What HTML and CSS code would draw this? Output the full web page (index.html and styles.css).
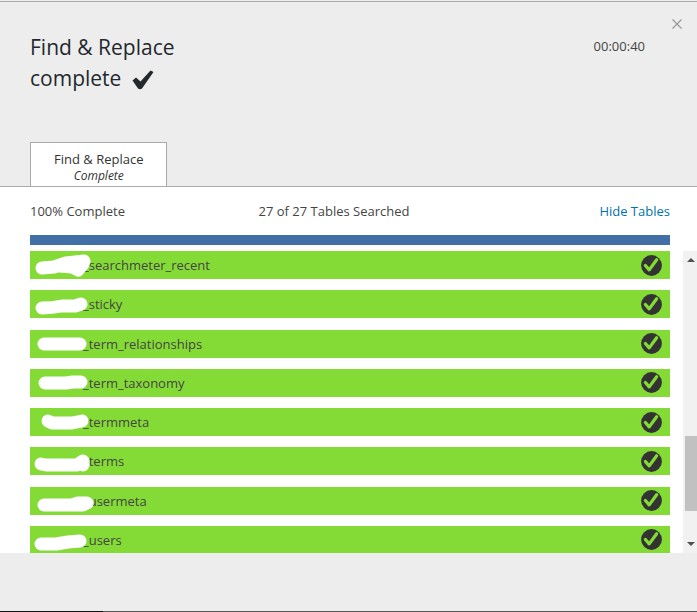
FILE: index.html
```
<!DOCTYPE html>
<html lang="en">
<head>
    <meta charset="UTF-8">
    <meta name="viewport" content="width=device-width, initial-scale=1.0">
    <title>Find &amp; Replace</title>
    <link rel="stylesheet" href="styles.css">
</head>
<body>
    <svg class="symbols" aria-hidden="true">
        <symbol id="done" viewBox="0 0 22 22">
            <circle cx="11" cy="11" r="10.9" fill="#333"/>
            <path d="M4.6 11 L8.6 15.6 L16.4 5" fill="none" stroke="#84db36" stroke-width="3.4" stroke-linecap="round" stroke-linejoin="round"/>
        </symbol>
    </svg>

    <div class="modal">
        <header class="modal-header">
            <div class="heading">
                <h2>Find &amp; Replace complete
                    <svg class="title-check" viewBox="0 0 22 20" aria-hidden="true">
                        <path d="M0.5 10.5 L4 7.5 L8.5 11.5 L18.5 0.5 L21.5 2 L10 18.5 Q8 20 6 18.5 Z" fill="#23282d"/>
                    </svg>
                </h2>
                <span class="timer">00:00:40</span>
            </div>
            <button class="close-button" aria-label="Close">
                <svg viewBox="0 0 10 10"><path d="M0.5 0.5 L9.5 9.5 M9.5 0.5 L0.5 9.5" stroke="#999" stroke-width="1.3"/></svg>
            </button>
            <button class="tab">
                <span>Find &amp; Replace</span>
                <em>Complete</em>
            </button>
        </header>

        <main class="progress">
            <div class="progress-info">
                <span>100% Complete</span>
                <span class="searched">27 of 27 Tables Searched</span>
                <a href="#tables">Hide Tables</a>
            </div>
            <div class="progress-bar"></div>

            <div class="tables" id="tables">
                <ul class="table-list">
                    <li>
                        <span class="name">_searchmeter_recent</span>
                        <svg class="redaction" viewBox="0 0 70 28"><path d="M12 17 L24 16 L36 12 L54 10 L53 13 L48 19 L42 16 L30 15"/></svg>
                        <svg class="done"><use href="#done"/></svg>
                    </li>
                    <li>
                        <span class="name">_sticky</span>
                        <svg class="redaction" viewBox="0 0 70 28"><path d="M12 18 Q22 18 32 16 L45 16 L51 14"/></svg>
                        <svg class="done"><use href="#done"/></svg>
                    </li>
                    <li>
                        <span class="name">_term_relationships</span>
                        <svg class="redaction" viewBox="0 0 70 28"><path d="M14 14 H50"/></svg>
                        <svg class="done"><use href="#done"/></svg>
                    </li>
                    <li>
                        <span class="name">_term_taxonomy</span>
                        <svg class="redaction" viewBox="0 0 70 28"><path d="M15 14 L36 14 L43 13 L51 13"/></svg>
                        <svg class="done"><use href="#done"/></svg>
                    </li>
                    <li>
                        <span class="name">_termmeta</span>
                        <svg class="redaction" viewBox="0 0 70 28"><path d="M18 13 L22 15 L42 15 L52 13"/></svg>
                        <svg class="done"><use href="#done"/></svg>
                    </li>
                    <li>
                        <span class="name">_terms</span>
                        <svg class="redaction" viewBox="0 0 70 28"><path d="M11 17 L16 18 L47 18 L53 14 L53 18"/></svg>
                        <svg class="done"><use href="#done"/></svg>
                    </li>
                    <li>
                        <span class="name">_usermeta</span>
                        <svg class="redaction" viewBox="0 0 70 28"><path d="M14 18 L42 18 L48 16 L57 16 L53 18 L42 18"/></svg>
                        <svg class="done"><use href="#done"/></svg>
                    </li>
                    <li>
                        <span class="name">_users</span>
                        <svg class="redaction" viewBox="0 0 70 28"><path d="M11 18 L26 18 L38 16 L50 15"/></svg>
                        <svg class="done"><use href="#done"/></svg>
                    </li>
                </ul>
                <div class="scrollbar" aria-hidden="true">
                    <svg class="arrow" viewBox="0 0 8 4"><path d="M4 0 L8 4 H0 Z"/></svg>
                    <div class="thumb"></div>
                    <svg class="arrow" viewBox="0 0 8 4"><path d="M0 0 H8 L4 4 Z"/></svg>
                </div>
            </div>
        </main>

        <footer class="modal-footer"></footer>
    </div>
</body>
</html>
```
FILE: styles.css
```
body {
    font-family: "Segoe UI", "Open Sans", "Noto Sans", sans-serif;
    font-size: 13px;
    line-height: 18px;
    color: #444;
    background-color: #ededed;
    margin: 0;
}
.symbols {
    display: none;
}
.modal {
    display: flex;
    flex-direction: column;
    min-height: 100vh;
    box-sizing: border-box;
    padding-top: 1px;
}
.modal-header {
    position: relative;
    padding: 30px 52px 0 30px;
    border-top: 1px solid #aaa;
    border-bottom: 1px solid #aaa;
}
.heading {
    display: flex;
    justify-content: space-between;
    align-items: flex-start;
    height: 110px;
}
h2 {
    width: 180px;
    margin: 0;
    font-size: 21px;
    font-weight: normal;
    line-height: 31px;
    color: #23282d;
}
.title-check {
    width: 22px;
    height: 20px;
    margin-left: 5px;
    vertical-align: -4px;
}
.timer {
    margin-top: 5px;
}
button {
    font: inherit;
    cursor: pointer;
}
.close-button {
    position: absolute;
    top: 12px;
    right: 10px;
    padding: 5px;
    border: none;
    background: none;
}
.close-button svg {
    display: block;
    width: 10px;
    height: 10px;
}
.tab {
    display: block;
    padding: 7px 23px 3px;
    border: 1px solid #aaa;
    border-bottom: none;
    background-color: #fff;
    color: #333;
    text-align: center;
}
.tab span,
.tab em {
    display: block;
}
.tab em {
    font-size: 12px;
    line-height: 15px;
}
.progress {
    background-color: #fff;
}
.progress-info {
    display: grid;
    grid-template-columns: 1fr auto 1fr;
    padding: 15px 27px 15px 30px;
}
.searched {
    padding-right: 32px;
}
.progress-info a {
    color: #0073aa;
    text-align: right;
    text-decoration: none;
}
.progress-bar {
    height: 10px;
    margin: 0 27px 6px 30px;
    background-color: #416fa6;
}
.tables {
    display: flex;
    height: 302px;
    padding-left: 30px;
    overflow: hidden;
}
.table-list {
    display: flex;
    flex: 1;
    flex-direction: column;
    justify-content: space-between;
    height: 303px;
    margin: 0 13px 0 0;
    padding: 0;
    list-style: none;
}
.table-list li {
    position: relative;
    display: flex;
    justify-content: space-between;
    align-items: center;
    height: 28px;
    padding: 0 8px 0 53px;
    background-color: #84db36;
}
.redaction {
    position: absolute;
    top: 0;
    left: 0;
    width: 70px;
    height: 28px;
    fill: none;
    stroke: #fff;
    stroke-width: 13px;
    stroke-linecap: round;
    stroke-linejoin: round;
}
.done {
    width: 21px;
    height: 21px;
}
.scrollbar {
    display: flex;
    flex-direction: column;
    align-items: center;
    width: 14px;
    padding: 7px 0;
    box-sizing: border-box;
    background-color: #f1f1f1;
}
.arrow {
    width: 8px;
    height: 4px;
    margin-left: 2px;
    fill: #505050;
}
.thumb {
    align-self: flex-end;
    width: 12px;
    height: 75px;
    margin: auto 0 31px;
    background-color: #c1c1c1;
}
.modal-footer {
    display: flex;
    flex: 1;
    align-items: flex-end;
}
.modal-footer::before,
.modal-footer::after {
    content: "";
    height: 1px;
    background-color: #111;
    flex: 0 0 103px;
}
.modal-footer::after {
    background-color: #555;
    flex: 1;
}
```
